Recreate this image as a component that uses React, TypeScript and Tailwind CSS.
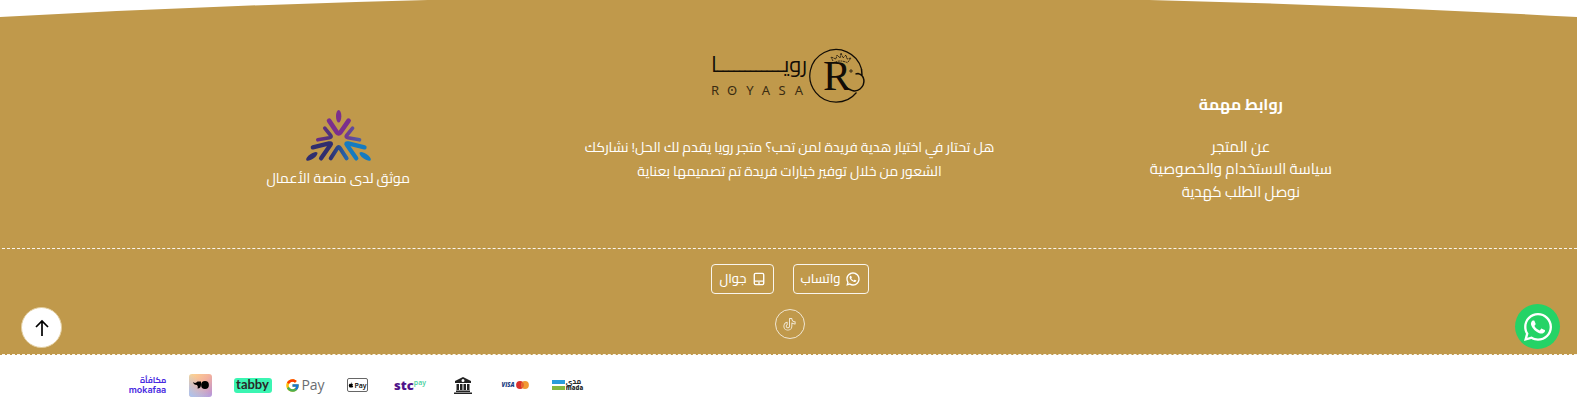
import React from "react";
import { FaApple, FaWhatsapp } from "react-icons/fa";
import { FcGoogle } from "react-icons/fc";
import { PiTiktokLogo } from "react-icons/pi";
import { RiWhatsappLine } from "react-icons/ri";

function BrandLogo() {
  return (
    <svg viewBox="2 0 158 58" direction="ltr" className="h-[58px] w-[158px]" role="img" aria-label="رويا ROYASA" fill="none" stroke="#120d06">
      <text x="50" y="25" textAnchor="middle" fontSize="22" fill="#120d06" stroke="none" fontFamily="Cairo, DejaVu Sans, sans-serif">رويــــــــــــا</text>
      <g fontSize="13" fill="#3a2c12" stroke="none" fontFamily="Noto Sans, sans-serif" textAnchor="middle">
        <text x="6" y="48">R</text>
        <text x="23" y="48">O</text>
        <text x="41" y="48">Y</text>
        <text x="57" y="48">A</text>
        <text x="73" y="48">S</text>
        <text x="90" y="48">A</text>
      </g>
      <circle cx="23" cy="43" r=".9" fill="#3a2c12" stroke="none" />
      <path d="M152.500 22A26.300 26.300 0 1 0 147.500 45.500" strokeWidth="1.2" />
      <text x="114" y="43" fontSize="42" fill="#120d06" stroke="none" fontFamily="Liberation Serif, serif">R</text>
      <path d="M137 40C141 44 147 45.500 151 42C157 37 156 28 149 26.500L146.500 27M152.500 22L153 28" strokeWidth="1.500" />
      <path d="M124 16q7-4 15 0M124 14l-2-4 5 2 1-4 3 3 1-5 2 5 3-3 1 4 4-1-3 4" strokeWidth=".8" strokeDasharray="2 .6" />
      <path d="M142 22v4M140 24h4" strokeWidth=".7" />
    </svg>
  );
}

function BusinessPlatformLogo() {
  return (
    <svg viewBox="165 40 201 160" className="h-[53px] w-[67px]" aria-hidden="true" fill="none" strokeWidth="13" strokeLinecap="round" strokeLinejoin="round">
      <defs>
        <linearGradient id="bp-left" x1="0" x2="1"><stop stopColor="#682b85" /><stop offset="1" stopColor="#4c3478" /></linearGradient>
        <linearGradient id="bp-right" x1="0" x2="1"><stop stopColor="#713a91" /><stop offset="1" stopColor="#4f5ca5" /></linearGradient>
        <linearGradient id="bp-bottom" x1="0" x2="1"><stop stopColor="#30306f" /><stop offset="1" stopColor="#2467ad" /></linearGradient>
      </defs>
      <ellipse cx="266" cy="62" rx="8" ry="19" fill="#7b2f8d" />
      <path d="M237 75L261 111Q266 117 271 111L296 75" stroke="#7b2f8d" strokeWidth="14" />
      <path d="M224 98L242 120Q246 125 238 127L203 133" stroke="url(#bp-left)" strokeWidth="11" />
      <path d="M308 98L290 120Q286 125 294 127L329 133" stroke="url(#bp-right)" strokeWidth="11" />
      <path d="M188 156L237 144Q246 142 241 149L213 189" stroke="#302e6e" />
      <path d="M344 156L295 144Q286 142 291 149L319 189" stroke="#157bc0" />
      <path d="M242 189L262 158Q266 152 270 158L290 189" stroke="url(#bp-bottom)" strokeWidth="12" />
      <ellipse cx="185" cy="183" rx="20" ry="8" transform="rotate(-35 185 183)" fill="#302e6e" />
      <ellipse cx="346" cy="183" rx="20" ry="8" transform="rotate(35 346 183)" fill="#157bc0" />
    </svg>
  );
}

function PhoneIcon() {
  return (
    <svg viewBox="0 0 14 16" className="h-[14px] w-3" fill="none" stroke="currentColor" strokeWidth="1.6" aria-hidden="true">
      <rect x="1.5" y="1.5" width="11" height="13" rx="1.5" />
      <path d="M1.5 10.5h11M6 12.7h2" />
    </svg>
  );
}

function Mada() {
  return (
    <span dir="ltr" role="img" aria-label="mada" className="flex items-center gap-px">
      <svg viewBox="0 0 13 10" className="h-[10px] w-[13px] shrink-0" aria-hidden="true">
        <path fill="#299cdb" d="M0 0h13v4H0z" />
        <path fill="#84b740" d="M0 6h13v4H0z" />
      </svg>
      <span className="flex flex-col text-[#262b2d]">
        <span className="text-[7px] leading-[6px] font-extrabold">مدى</span>
        <span className="font-['Open_Sans',sans-serif] text-[6px] leading-[6px] font-extrabold">mada</span>
      </span>
    </span>
  );
}

function VisaMastercard() {
  return (
    <span dir="ltr" className="flex items-center gap-px">
      <span className="font-['Open_Sans',sans-serif] text-[6px] leading-none font-extrabold text-[#1c4083] italic">VISA</span>
      <svg viewBox="0 0 13 8" className="h-2 w-[13px]" role="img" aria-label="Mastercard">
        <circle cx="4" cy="4" r="3.900" fill="#d9302c" />
        <circle cx="9" cy="4" r="3.900" fill="#f19a35" />
        <path fill="#e56430" d="M6.500 1a3.900 3.900 0 0 1 0 6a3.900 3.900 0 0 1 0-6" />
      </svg>
    </span>
  );
}

function Bank() {
  return (
    <svg viewBox="0 0 18 17" className="h-[17px] w-[18px]" role="img" aria-label="تحويل بنكي" fill="#222">
      <path fillRule="evenodd" d="M9 0l8 4v2H1V4zm0 2a1.5 1.5 0 1 0 0 3a1.5 1.5 0 0 0 0-3z" />
      <path d="M2.500 7h2.500v6h-2.500zM6 7h2.500v6h-2.500zM9.500 7h2.500v6h-2.500zM13 7h2.500v6h-2.500zM2 13.500h14V15H2zM0 15.500h18V17H0z" />
    </svg>
  );
}

function Tamara() {
  return (
    <svg viewBox="0 0 23 23" className="size-[23px]" role="img" aria-label="تمارا">
      <defs>
        <linearGradient id="tm" x1="0" y1="0" x2="1" y2="1"><stop stopColor="#ffd88e" /><stop offset=".5" stopColor="#f3b09d" /><stop offset="1" stopColor="#b48fdc" /></linearGradient>
        <linearGradient id="tm-blue" x1="0" y1="1" x2=".6" y2=".4"><stop stopColor="#a5c4f5" /><stop offset="1" stopColor="#a5c4f5" stopOpacity="0" /></linearGradient>
      </defs>
      <rect width="23" height="23" rx="3" fill="url(#tm)" />
      <rect width="23" height="23" rx="3" fill="url(#tm-blue)" />
      <path d="M4 8q2.500 2 4.500-.500h3.500v3q0 4-3.500 4q1-2-.500-3.500q-3.500 0-4-3" />
      <circle cx="16" cy="11" r="3.900" />
    </svg>
  );
}

const payments: { name: string; logo: React.ReactNode }[] = [
  { name: "mada", logo: <Mada /> },
  { name: "cards", logo: <VisaMastercard /> },
  { name: "bank", logo: <Bank /> },
  { name: "stc", logo: (
    <span dir="ltr" className="flex items-start font-['Open_Sans',sans-serif] leading-none">
      <b className="text-[13px] leading-[14px] font-extrabold text-[#4f148a]">stc</b>
      <span className="text-[7px] leading-[9px] font-semibold text-[#45d09b]">pay</span>
    </span>
  ) },
  { name: "apple", logo: (
    <span dir="ltr" className="flex h-[14px] w-[21px] items-center justify-center rounded-[2px] border border-[#666] font-['Open_Sans',sans-serif] text-[7px] leading-none font-semibold text-black">
      <FaApple className="size-[6px]" />Pay
    </span>
  ) },
  { name: "google", logo: (
    <span dir="ltr" className="flex items-center gap-px font-['Open_Sans',sans-serif] text-sm leading-none text-[#6a6d71]">
      <FcGoogle className="size-[15px] shrink-0" />Pay
    </span>
  ) },
  { name: "tabby", logo: (
    <span dir="ltr" className="flex h-[15px] w-[38px] items-center justify-center rounded-[3px] bg-[#3bf5b2] pb-px font-['Lato',sans-serif] text-[13px] leading-none font-bold text-[#292929]">tabby</span>
  ) },
  { name: "tamara", logo: <Tamara /> },
  { name: "mokafaa", logo: (
    <span dir="ltr" className="flex flex-col items-end text-[#4629df]">
      <span className="text-[8px] leading-[8px] font-bold">مكافأة</span>
      <span className="font-['Inter',sans-serif] text-[9px] leading-[9px] font-semibold">mokafaa</span>
    </span>
  ) },
];

const links = ["عن المتجر", "سياسة الاستخدام والخصوصية", "نوصل الطلب كهدية"];

export default function App() {
  return (
    <footer dir="rtl" className="relative bg-white font-['Cairo','Noto_Sans_Arabic','DejaVu_Sans',sans-serif] text-white">
      <svg viewBox="0 0 1577 17" preserveAspectRatio="none" className="block h-[17px] w-full" aria-hidden="true">
        <path d="M0 17Q788.5 -26 1577 17Z" fill="#c0994b" />
      </svg>

      <div className="bg-[#c0994b] pl-[2px]">
        <div className="mx-auto grid max-w-[1354px] grid-cols-3 items-center pt-[30px] text-center">
          <nav aria-labelledby="links-title" className="pb-1">
            <h2 id="links-title" className="mb-4 text-base leading-8 font-bold">روابط مهمة</h2>
            <ul>
              {links.map((label) => (
                <li key={label} className="text-[15px] leading-normal"><a href="#">{label}</a></li>
              ))}
            </ul>
          </nav>
          <section className="flex flex-col items-center pb-[65px]">
            <a href="#" className="block"><BrandLogo /></a>
            <p className="mt-[30px] text-sm leading-6">
              هل تحتار في اختيار هدية فريدة لمن تحب؟ متجر رويا يقدم لك الحل! نشاركك
              <br />
              الشعور من خلال توفير خيارات فريدة تم تصميمها بعناية
            </p>
          </section>
          <a href="#" className="flex flex-col items-center gap-1 pt-1">
            <BusinessPlatformLogo />
            <span className="text-sm leading-6">موثق لدى منصة الأعمال</span>
          </a>
        </div>

        <div className="flex flex-col items-center gap-[15px] border-y border-dashed border-white/90 py-[15px]">
          <div className="flex gap-[19px]">
            <a href="#" className="flex h-[30px] w-[76px] items-center justify-center gap-1 rounded border border-white/90 text-[13px] font-medium">
              <RiWhatsappLine className="size-4" />واتساب
            </a>
            <a href="#" className="flex h-[30px] w-[63px] items-center justify-center gap-[6px] rounded border border-white/90 text-[13px] font-medium">
              <PhoneIcon />جوال
            </a>
          </div>
          <a href="#" aria-label="TikTok" className="flex size-[30px] items-center justify-center rounded-full border border-white/75 text-white/80">
            <PiTiktokLogo className="size-[15px]" />
          </a>
        </div>
      </div>

      <div className="mx-auto flex h-12 max-w-[1354px] items-center justify-end px-4 pt-4 pb-1">
        <ul className="flex w-[460px] justify-between">
          {payments.map((p) => (
            <li key={p.name} className="flex h-6 w-10 items-center justify-center">{p.logo}</li>
          ))}
        </ul>
      </div>

      <button type="button" aria-label="العودة للأعلى" className="absolute bottom-[55px] left-[21px] flex size-[41px] items-center justify-center rounded-full border border-[#e3ce9f] bg-white text-black">
        <svg viewBox="0 0 14 18" className="h-[18px] w-[14px]" fill="none" stroke="currentColor" strokeWidth="1.700" aria-hidden="true">
          <path d="M7 17V2M1 8l6-6 6 6" />
        </svg>
      </button>
      <a href="#" aria-label="تواصل عبر واتساب" className="absolute right-[17px] bottom-[54px] flex size-[45px] items-center justify-center rounded-full bg-[#25d366]">
        <FaWhatsapp className="size-8" />
      </a>
    </footer>
  );
}
